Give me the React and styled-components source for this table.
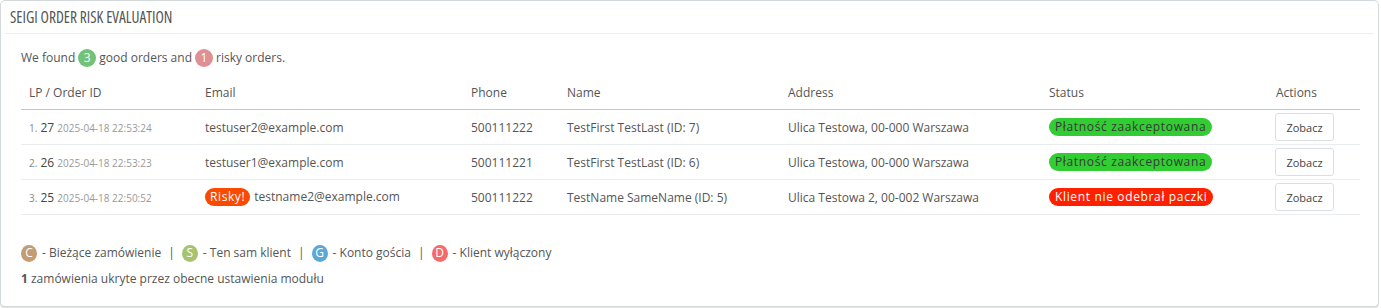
import styled, { createGlobalStyle } from "styled-components";

const GlobalStyle = createGlobalStyle`
  body {
    margin: 0;
    background: #fff;
    font-family: "Open Sans", "Liberation Sans", sans-serif;
    font-size: 12px;
    color: #555;
  }
`;

const Page = styled.div`
  padding: 0 2px 2px 0;
`;

const Panel = styled.div`
  border: 1px solid #d3d8db;
  border-radius: 5px;
  background: #fff;
  box-shadow: rgba(0, 0, 0, 0.1) 0 2px 0, #fff 0 0 0 3px inset;
  padding: 0 20px 16px 20px;
  min-height: 289px;
`;

const Heading = styled.div`
  margin: 0 -16px 15px -16px;
  padding: 0 0 0 5px;
  height: 32px;
  line-height: 33px;
  border-bottom: 1px solid #eee;
  font-size: 15.4px;
  font-stretch: 75%;
  text-transform: uppercase;
  color: #555;
`;

const Summary = styled.p`
  margin: 0 0 9px 0;
  line-height: 18px;
  display: flex;
  align-items: center;
  gap: 3px;
`;

const Count = styled.span`
  display: inline-flex;
  align-items: center;
  justify-content: center;
  width: 18px;
  height: 18px;
  border-radius: 50%;
  background: ${(p) => p.$bg};
  color: #fff;
  font-size: 12px;
`;

const Table = styled.table`
  width: 100%;
  border-collapse: collapse;
  table-layout: fixed;
`;

const Th = styled.th`
  text-align: left;
  font-weight: 400;
  color: #555;
  height: 33px;
  padding: 0 8px;
  border-bottom: 1px solid #a0d0eb;
  width: ${(p) => p.$w - 16}px;
`;

const Td = styled.td`
  height: 34px;
  padding: 0 8px;
  border-bottom: 1px solid #eaedef;
  white-space: nowrap;
  color: #555;
`;

const Lp = styled.span`
  font-size: 10px;
  color: #888;
`;

const OrderNo = styled.span`
  font-size: 12px;
  color: #444;
`;

const Date = styled.span`
  font-size: 10px;
  color: #999;
`;

const Risky = styled.span`
  display: inline-block;
  background: #fa4a00;
  color: #fff;
  border-radius: 9px;
  padding: 0 5px;
  line-height: 18px;
  margin-right: 4px;
  letter-spacing: 0.6px;
`;

const Status = styled.span`
  display: inline-block;
  background: ${(p) => p.$bg};
  color: ${(p) => p.$fg};
  border-radius: 9px;
  padding: 0 6px;
  line-height: 18px;
  letter-spacing: 0.65px;
`;

const Button = styled.button`
  font-family: "Open Sans", "Liberation Sans", sans-serif;
  font-size: 11px;
  color: #444;
  background: #fff;
  border: 1px solid #dcdfe2;
  border-radius: 3px;
  height: 28px;
  width: 59px;
  padding: 0;
  margin-left: -1px;
`;

const Legend = styled.div`
  margin-top: 29px;
  display: flex;
  align-items: center;
  font-size: 12px;
  line-height: 18px;
`;

const Dot = styled.span`
  display: inline-flex;
  align-items: center;
  justify-content: center;
  width: 16px;
  height: 17px;
  border-radius: 50%;
  background: ${(p) => p.$bg};
  color: #fff;
  font-size: 12px;
  margin-right: 5px;
`;

const Sep = styled.span`
  margin: 0 7px;
`;

const Hidden = styled.p`
  margin: 8px 0 0 0;
  font-size: 12px;
  line-height: 18px;
`;

const cols = [
  ["LP / Order ID", 176],
  ["Email", 266],
  ["Phone", 96],
  ["Name", 221],
  ["Address", 261],
  ["Status", 227],
  ["Actions", 92],
];

const orders = [
  {
    lp: 1,
    id: 27,
    date: "2025-04-18 22:53:24",
    email: "testuser2@example.com",
    phone: "500111222",
    name: "TestFirst TestLast (ID: 7)",
    address: "Ulica Testowa, 00-000 Warszawa",
    status: "Płatność zaakceptowana",
    ok: true,
  },
  {
    lp: 2,
    id: 26,
    date: "2025-04-18 22:53:23",
    email: "testuser1@example.com",
    phone: "500111221",
    name: "TestFirst TestLast (ID: 6)",
    address: "Ulica Testowa, 00-000 Warszawa",
    status: "Płatność zaakceptowana",
    ok: true,
  },
  {
    lp: 3,
    id: 25,
    date: "2025-04-18 22:50:52",
    email: "testname2@example.com",
    phone: "500111222",
    name: "TestName SameName (ID: 5)",
    address: "Ulica Testowa 2, 00-002 Warszawa",
    status: "Klient nie odebrał paczki",
    ok: false,
    risky: true,
  },
];

const legend = [
  ["C", "#c39b74", "- Bieżące zamówienie"],
  ["S", "#a6c46f", "- Ten sam klient"],
  ["G", "#5ba8d6", "- Konto gościa"],
  ["D", "#f56a6a", "- Klient wyłączony"],
];

export default function App() {
  return (
    <Page>
      <GlobalStyle />
      <Panel>
        <Heading>Seigi Order Risk Evaluation</Heading>
        <Summary>
          We found <Count $bg="#72c279">3</Count> good orders and{" "}
          <Count $bg="#e08f95">1</Count> risky orders.
        </Summary>
        <Table>
          <thead>
            <tr>
              {cols.map(([label, w]) => (
                <Th key={label} $w={w}>
                  {label}
                </Th>
              ))}
            </tr>
          </thead>
          <tbody>
            {orders.map((o) => (
              <tr key={o.id}>
                <Td>
                  <Lp>{o.lp}.</Lp> <OrderNo>{o.id}</OrderNo> <Date>{o.date}</Date>
                </Td>
                <Td>
                  {o.risky && <Risky>Risky!</Risky>}
                  {o.email}
                </Td>
                <Td>{o.phone}</Td>
                <Td>{o.name}</Td>
                <Td>{o.address}</Td>
                <Td>
                  <Status
                    $bg={o.ok ? "#32cd32" : "#ff2000"}
                    $fg={o.ok ? "#383838" : "#fff"}
                  >
                    {o.status}
                  </Status>
                </Td>
                <Td>
                  <Button>Zobacz</Button>
                </Td>
              </tr>
            ))}
          </tbody>
        </Table>
        <Legend>
          {legend.map(([letter, bg, text], i) => (
            <span key={letter} style={{ display: "contents" }}>
              {i > 0 && <Sep>|</Sep>}
              <Dot $bg={bg}>{letter}</Dot>
              {text}
            </span>
          ))}
        </Legend>
        <Hidden>
          <b>1</b> zamówienia ukryte przez obecne ustawienia modułu
        </Hidden>
      </Panel>
    </Page>
  );
}
